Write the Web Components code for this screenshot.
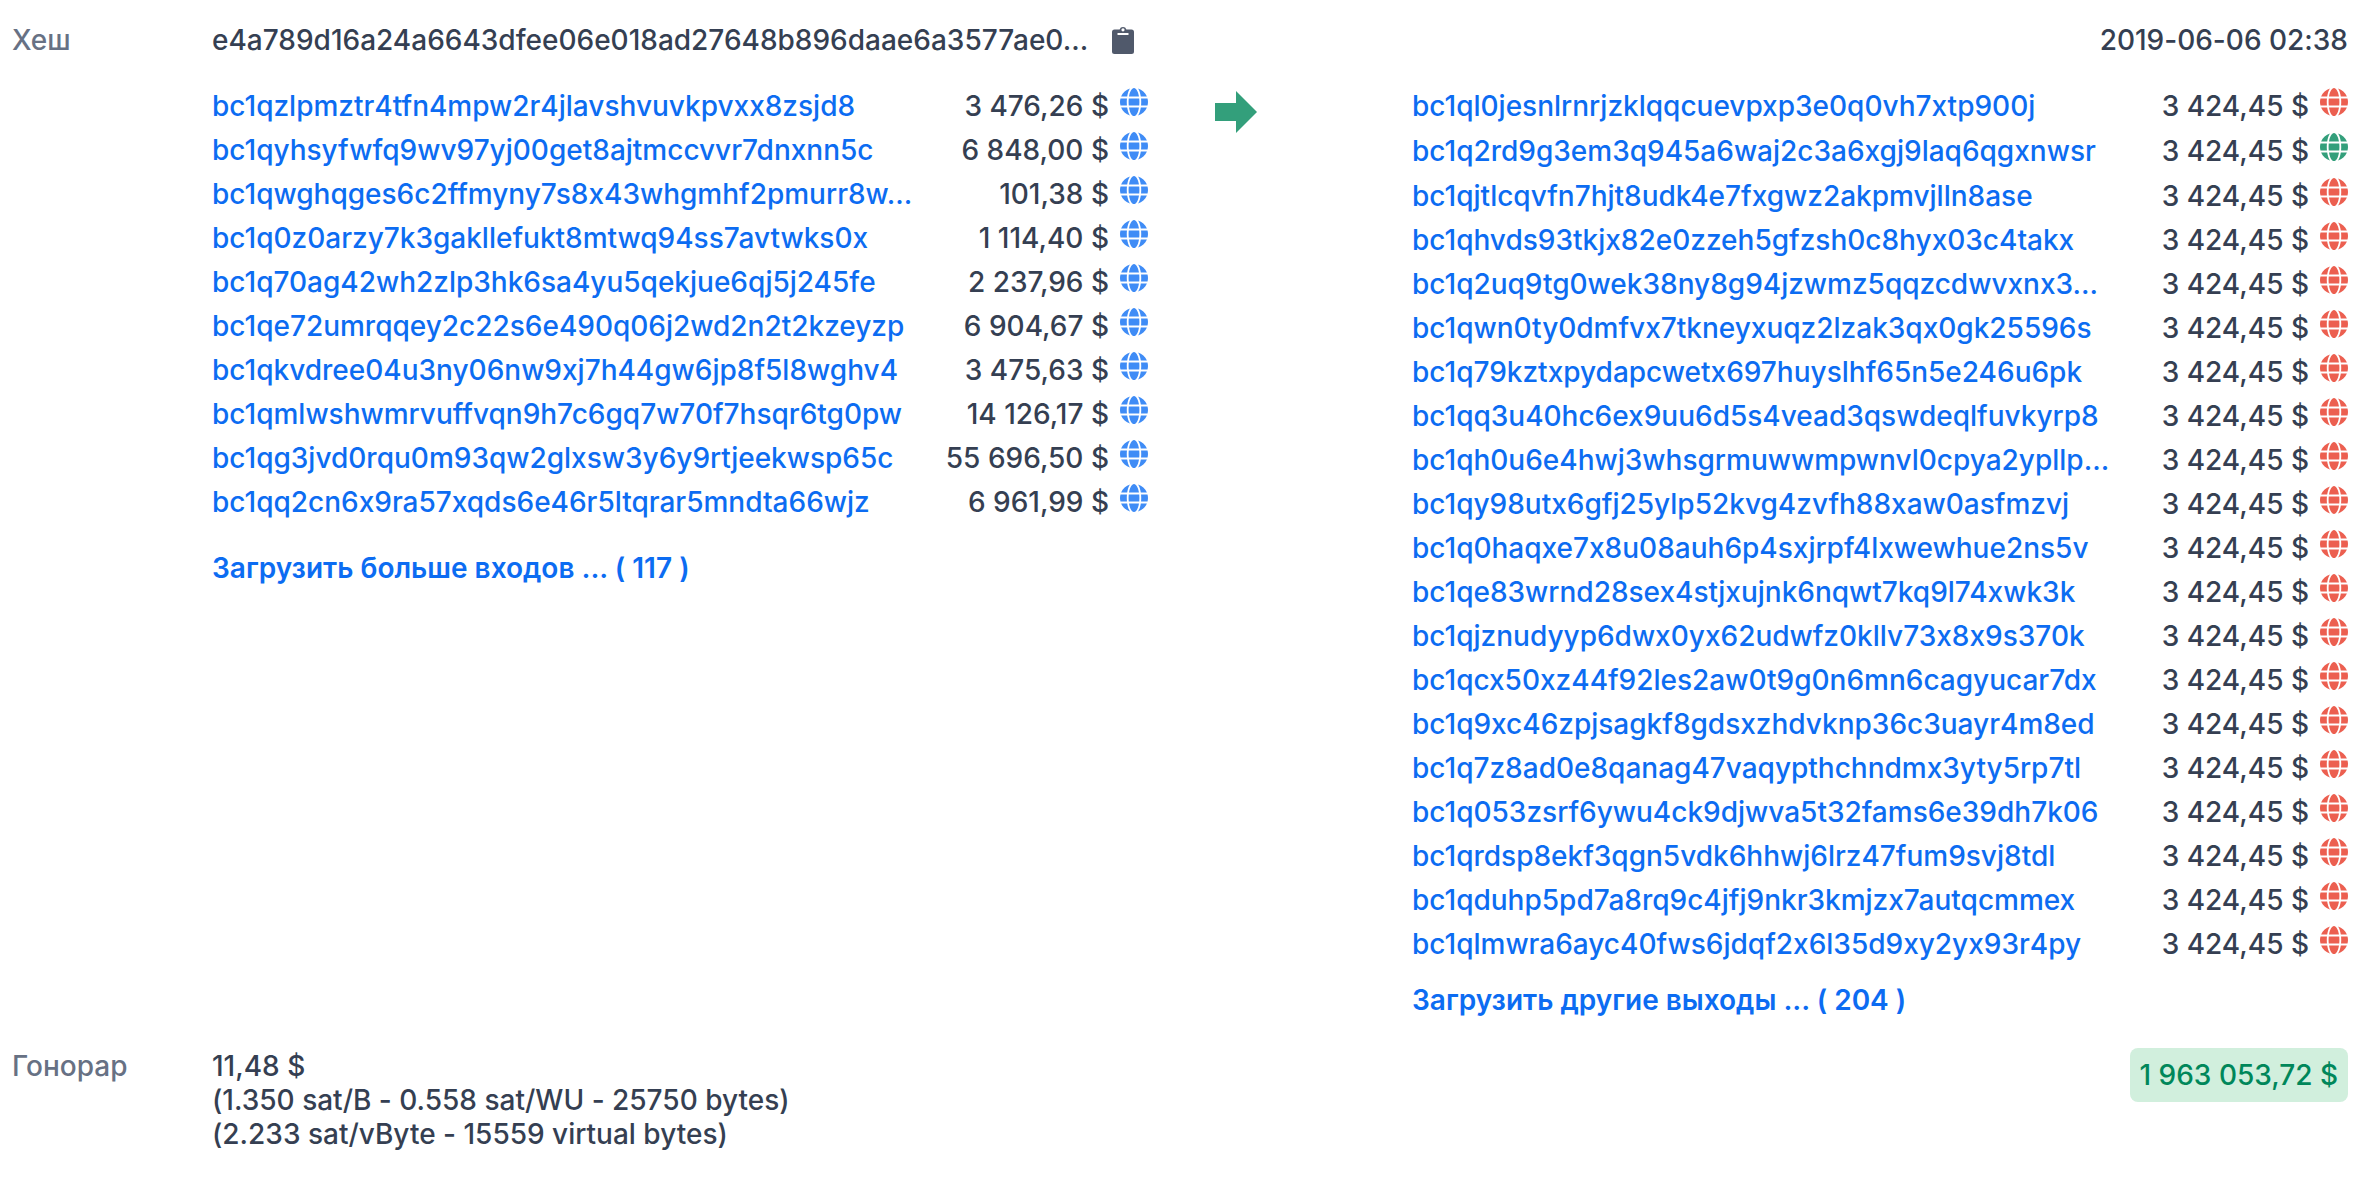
<!DOCTYPE html>
<html lang="ru">
<head>
<meta charset="utf-8">
<meta name="viewport" content="width=device-width, initial-scale=1">
<title>Транзакция</title>
<style>
  body {
    margin: 0;
    background: #fff;
    color: #353f52;
    font: 500 28px/44px Inter, "Liberation Sans", sans-serif;
    /* keeps the x between digits from turning into a multiplication sign */
    font-variant-ligatures: no-contextual;
  }
</style>
</head>
<body>

<tx-summary>
  <span slot="hash-label">Хеш</span>
  <tx-hash slot="hash">e4a789d16a24a6643dfee06e018ad27648b896daae6a3577ae0...</tx-hash>
  <time slot="time" datetime="2019-06-06T02:38">2019-06-06 02:38</time>
  <tx-list slot="inputs" id="inputs" more="Загрузить больше входов ... ( 117 )"></tx-list>
  <tx-list slot="outputs" id="outputs" more="Загрузить другие выходы ... ( 204 )"></tx-list>
  <span slot="fee-label">Гонорар</span>
  <div slot="fee">11,48 $</div>
  <div slot="fee">(1.350 sat/B - 0.558 sat/WU - 25750 bytes)</div>
  <div slot="fee">(2.233 sat/vByte - 15559 virtual bytes)</div>
  <tx-badge slot="total">1 963 053,72 $</tx-badge>
</tx-summary>

<template id="tx-summary">
  <style>
    :host { display: block; padding: 18px 16px 12px 12px; }
    .grid {
      display: grid;
      grid-template-columns: 200px minmax(0, 1fr) 264px minmax(0, 1fr);
      align-items: start;
    }
    .label { color: #677184; }
    .hash, .time { margin-bottom: 22px; }
    .time { grid-column: 3 / -1; text-align: right; }
    .inputs { grid-column: 2; }
    .arrow { display: block; width: 42px; height: 42px; margin: 7px 0 0 67px; fill: #339f7b; }
    .fee-label, .fee { line-height: 34px; margin-top: 27px; }
    .total { grid-column: 4; margin-top: 26px; text-align: right; }
  </style>
  <div class="grid">
    <div class="label"><slot name="hash-label"></slot></div>
    <div class="hash"><slot name="hash"></slot></div>
    <div class="time"><slot name="time"></slot></div>
    <div class="inputs"><slot name="inputs"></slot></div>
    <svg class="arrow" viewBox="0 0 42 42" aria-hidden="true"><path d="M0 12h21V0l21 21-21 21V30H0z"/></svg>
    <div><slot name="outputs"></slot></div>
    <div class="label fee-label"><slot name="fee-label"></slot></div>
    <div class="fee"><slot name="fee"></slot></div>
    <div class="total"><slot name="total"></slot></div>
  </div>
</template>

<template id="tx-hash">
  <style>
    :host { display: flex; align-items: center; gap: 24px; }
    .text { overflow: hidden; white-space: nowrap; text-overflow: ellipsis; }
    button { flex: none; padding: 0; border: 0; background: none; cursor: pointer; }
    svg { display: block; width: 22px; height: 28px; fill: #50596b; }
  </style>
  <span class="text"><slot></slot></span>
  <button type="button" aria-label="Копировать">
    <svg viewBox="0 0 22 28"><path fill-rule="evenodd" d="M2.5 3.5H7.6a3.6 3.6 0 0 1 6.8 0h5.1A2.5 2.5 0 0 1 22 6v19.500a2.500 2.500 0 0 1-2.500 2.500h-17A2.500 2.500 0 0 1 0 25.500V6a2.500 2.500 0 0 1 2.500-2.500zM11 2.200a1.600 1.600 0 1 0 0 3.200 1.600 1.600 0 0 0 0-3.200zM5.500 7v2h11V7z"/></svg>
  </button>
</template>

<template id="tx-list">
  <style>
    :host { display: block; }
    a { display: inline-block; color: #0c6cf2; font-weight: 600; text-decoration: none; }
    :host([id="inputs"]) a { margin-top: 22px; }
    :host([id="outputs"]) a { margin-top: 12px; }
  </style>
  <div class="rows"></div>
  <a href="#"></a>
</template>

<template id="tx-row">
  <style>
    :host { display: flex; align-items: center; min-height: 44px; --icon: #3f8cf6; }
    :host([state="spent"]) { --icon: #ec5f50; }
    :host([state="unspent"]) { --icon: #339f7b; min-height: 46px; }
    .address {
      flex: 1;
      min-width: 0;
      overflow: hidden;
      white-space: nowrap;
      text-overflow: ellipsis;
      color: #0c6cf2;
      text-decoration: none;
    }
    .amount { flex: none; margin-left: 20px; white-space: nowrap; }
    .state { flex: none; padding-bottom: 8px; margin-left: 11px; }
    svg { display: block; width: 28px; height: 28px; fill: var(--icon); }
  </style>
  <a class="address" href="#"></a>
  <span class="amount"></span>
  <a class="state" href="#" aria-label="Подробнее">
    <svg viewBox="0 8 496 496"><path d="M336.500 160C322 70.700 287.800 8 248 8s-74 62.700-88.500 152h177zM152 256c0 22.200 1.200 43.500 3.300 64h185.300c2.100-20.500 3.300-41.800 3.300-64s-1.200-43.500-3.300-64H155.300c-2.100 20.500-3.300 41.800-3.300 64zm324.700-96c-28.600-67.900-86.500-120.400-158-141.600 24.400 33.800 41.200 84.700 50 141.600h108zM177.200 18.400C105.800 39.600 47.800 92.100 19.300 160h108c8.700-56.900 25.500-107.800 49.900-141.600zM487.400 192H372.700c2.100 21 3.300 42.500 3.300 64s-1.200 43-3.300 64h114.600c5.500-20.500 8.600-41.800 8.600-64s-3.100-43.500-8.500-64zM120 256c0-21.500 1.200-43 3.300-64H8.600C3.200 212.500 0 233.800 0 256s3.200 43.500 8.600 64h114.600c-2-21-3.200-42.500-3.200-64zm39.500 96c14.500 89.300 48.700 152 88.500 152s74-62.700 88.500-152h-177zm159.300 141.600c71.400-21.200 129.400-73.700 158-141.600h-108c-8.800 56.900-25.600 107.800-50 141.600zM19.300 352c28.600 67.900 86.500 120.400 158 141.600-24.400-33.800-41.200-84.700-50-141.600h-108z"/></svg>
  </a>
</template>

<template id="tx-badge">
  <style>
    :host {
      display: inline-block;
      padding: 10px;
      border-radius: 8px;
      background: #d1efdd;
      color: #00875a;
      line-height: 34px;
      white-space: nowrap;
    }
  </style>
  <slot></slot>
</template>

<script>
class TxElement extends HTMLElement {
  constructor() {
    super();
    const template = document.getElementById(this.localName);
    this.attachShadow({ mode: 'open' });
    this.shadowRoot.appendChild(document.importNode(template.content, true));
  }
}

class TxSummary extends TxElement {}

class TxBadge extends TxElement {}

class TxHash extends TxElement {
  connectedCallback() {
    this.shadowRoot.querySelector('button').addEventListener('click', () => {
      if (navigator.clipboard) {
        navigator.clipboard.writeText(this.textContent);
      }
    });
  }
}

class TxRow extends TxElement {
  static get observedAttributes() {
    return ['address', 'amount'];
  }

  attributeChangedCallback(attrName, oldValue, newValue) {
    this.shadowRoot.querySelector('.' + attrName).textContent = newValue;
  }
}

class TxList extends TxElement {
  static get observedAttributes() {
    return ['more'];
  }

  attributeChangedCallback(attrName, oldValue, newValue) {
    this.shadowRoot.querySelector('a').textContent = newValue;
  }

  set rows(rows) {
    const container = this.shadowRoot.querySelector('.rows');
    container.textContent = '';
    rows.forEach(([address, amount, state]) => {
      const row = document.createElement('tx-row');
      row.setAttribute('address', address);
      row.setAttribute('amount', amount);
      row.setAttribute('state', state);
      container.appendChild(row);
    });
  }
}

customElements.define('tx-summary', TxSummary);
customElements.define('tx-badge', TxBadge);
customElements.define('tx-hash', TxHash);
customElements.define('tx-row', TxRow);
customElements.define('tx-list', TxList);

document.getElementById('inputs').rows = [
  ['bc1qzlpmztr4tfn4mpw2r4jlavshvuvkpvxx8zsjd8', '3 476,26 $', 'input'],
  ['bc1qyhsyfwfq9wv97yj00get8ajtmccvvr7dnxnn5c', '6 848,00 $', 'input'],
  ['bc1qwghqges6c2ffmyny7s8x43whgmhf2pmurr8w...', '101,38 $', 'input'],
  ['bc1q0z0arzy7k3gakllefukt8mtwq94ss7avtwks0x', '1 114,40 $', 'input'],
  ['bc1q70ag42wh2zlp3hk6sa4yu5qekjue6qj5j245fe', '2 237,96 $', 'input'],
  ['bc1qe72umrqqey2c22s6e490q06j2wd2n2t2kzeyzp', '6 904,67 $', 'input'],
  ['bc1qkvdree04u3ny06nw9xj7h44gw6jp8f5l8wghv4', '3 475,63 $', 'input'],
  ['bc1qmlwshwmrvuffvqn9h7c6gq7w70f7hsqr6tg0pw', '14 126,17 $', 'input'],
  ['bc1qg3jvd0rqu0m93qw2glxsw3y6y9rtjeekwsp65c', '55 696,50 $', 'input'],
  ['bc1qq2cn6x9ra57xqds6e46r5ltqrar5mndta66wjz', '6 961,99 $', 'input']
];

document.getElementById('outputs').rows = [
  ['bc1ql0jesnlrnrjzklqqcuevpxp3e0q0vh7xtp900j', '3 424,45 $', 'spent'],
  ['bc1q2rd9g3em3q945a6waj2c3a6xgj9laq6qgxnwsr', '3 424,45 $', 'unspent'],
  ['bc1qjtlcqvfn7hjt8udk4e7fxgwz2akpmvjlln8ase', '3 424,45 $', 'spent'],
  ['bc1qhvds93tkjx82e0zzeh5gfzsh0c8hyx03c4takx', '3 424,45 $', 'spent'],
  ['bc1q2uq9tg0wek38ny8g94jzwmz5qqzcdwvxnx3...', '3 424,45 $', 'spent'],
  ['bc1qwn0ty0dmfvx7tkneyxuqz2lzak3qx0gk25596s', '3 424,45 $', 'spent'],
  ['bc1q79kztxpydapcwetx697huyslhf65n5e246u6pk', '3 424,45 $', 'spent'],
  ['bc1qq3u40hc6ex9uu6d5s4vead3qswdeqlfuvkyrp8', '3 424,45 $', 'spent'],
  ['bc1qh0u6e4hwj3whsgrmuwwmpwnvl0cpya2ypllp...', '3 424,45 $', 'spent'],
  ['bc1qy98utx6gfj25ylp52kvg4zvfh88xaw0asfmzvj', '3 424,45 $', 'spent'],
  ['bc1q0haqxe7x8u08auh6p4sxjrpf4lxwewhue2ns5v', '3 424,45 $', 'spent'],
  ['bc1qe83wrnd28sex4stjxujnk6nqwt7kq9l74xwk3k', '3 424,45 $', 'spent'],
  ['bc1qjznudyyp6dwx0yx62udwfz0kllv73x8x9s370k', '3 424,45 $', 'spent'],
  ['bc1qcx50xz44f92les2aw0t9g0n6mn6cagyucar7dx', '3 424,45 $', 'spent'],
  ['bc1q9xc46zpjsagkf8gdsxzhdvknp36c3uayr4m8ed', '3 424,45 $', 'spent'],
  ['bc1q7z8ad0e8qanag47vaqypthchndmx3yty5rp7tl', '3 424,45 $', 'spent'],
  ['bc1q053zsrf6ywu4ck9djwva5t32fams6e39dh7k06', '3 424,45 $', 'spent'],
  ['bc1qrdsp8ekf3qgn5vdk6hhwj6lrz47fum9svj8tdl', '3 424,45 $', 'spent'],
  ['bc1qduhp5pd7a8rq9c4jfj9nkr3kmjzx7autqcmmex', '3 424,45 $', 'spent'],
  ['bc1qlmwra6ayc40fws6jdqf2x6l35d9xy2yx93r4py', '3 424,45 $', 'spent']
];
</script>
</body>
</html>
